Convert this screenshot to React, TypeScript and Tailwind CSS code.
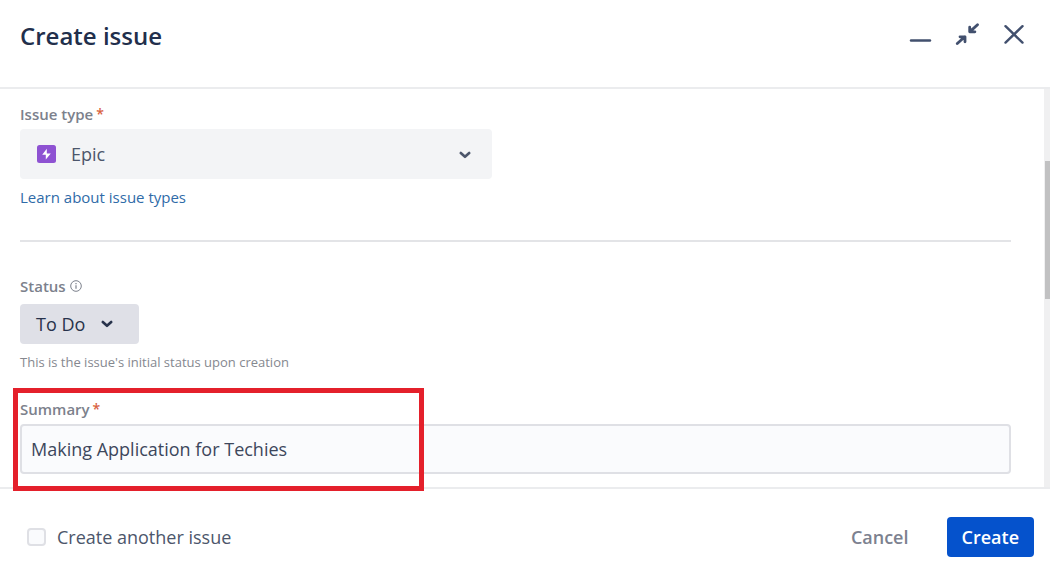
import type { ReactNode } from "react";

function Chevron({ className }: { className: string }) {
  return (
    <svg viewBox="0 0 12 8" className={className} fill="none" stroke="currentColor" strokeWidth="2.6" strokeLinecap="round" strokeLinejoin="round" aria-hidden="true">
      <path d="M1.800 2 6 5.800 10.200 2" />
    </svg>
  );
}

function FieldLabel({ htmlFor, required, children }: { htmlFor: string; required?: boolean; children: ReactNode }) {
  return (
    <label htmlFor={htmlFor} className="flex h-5 items-center gap-[3px] text-[15px] leading-5 font-semibold text-[#7c818c]">
      {children}
      {required && <span className="text-sm font-semibold text-[#d9623f]">*</span>}
    </label>
  );
}

function Header() {
  return (
    <header className="flex h-[89px] items-start justify-between border-b-2 border-[#ebecee] pt-5 pr-6 pl-5">
      <h1 className="text-2xl leading-8 font-semibold text-[#222f4c]">Create issue</h1>
      <div className="flex items-center gap-[23px] text-[#42506e]">
        <button type="button" aria-label="Minimize">
          <svg viewBox="0 0 24 28" className="h-7 w-6" fill="none" stroke="currentColor" strokeWidth="2.4" strokeLinecap="round">
            <path d="M3 20.500h19" />
          </svg>
        </button>
        <button type="button" aria-label="Collapse">
          <svg viewBox="0 0 24 28" className="h-7 w-6" fill="none" stroke="currentColor" strokeWidth="2.800" strokeLinecap="round" strokeLinejoin="round">
            <path d="M22.500 4.800 15 11.600M14.700 7.200v4.600h5.200M2.300 23.500l7.500-6.700M5 16.800h5v5" />
          </svg>
        </button>
        <button type="button" aria-label="Close">
          <svg viewBox="0 0 24 28" className="h-7 w-6" fill="none" stroke="currentColor" strokeWidth="2.4" strokeLinecap="round">
            <path d="m3.500 6.200 17 16.400M20.500 6.200l-17 16.400" />
          </svg>
        </button>
      </div>
    </header>
  );
}

function IssueTypeField() {
  return (
    <div className="flex flex-col items-start">
      <FieldLabel htmlFor="issue-type" required>Issue type</FieldLabel>
      <div className="relative mt-[5px] w-[472px] max-w-full text-[#4c566b]">
        <select id="issue-type" className="h-[50px] w-full appearance-none rounded-[4px] bg-[#f3f4f6] pr-10 pl-[51px] text-lg">
          <option>Epic</option>
        </select>
        <svg viewBox="0 0 20 18" className="pointer-events-none absolute top-4 left-4 h-[18px] w-5" aria-hidden="true">
          <rect x="1" width="19" height="18" rx="2.500" fill="#8e52d2" />
          <path d="M10.800 3.800 6.200 9.800h3.600v4.600l5-6h-4z" fill="#fff" />
        </svg>
        <Chevron className="pointer-events-none absolute top-[22px] right-[21px] h-2 w-3" />
      </div>
      <a href="#issue-types" className="mt-2 text-[15px] leading-5 text-[#2f6ba8]">Learn about issue types</a>
    </div>
  );
}

function StatusField() {
  return (
    <div className="flex flex-col items-start">
      <div className="flex items-center gap-1 text-[#7c818c]">
        <FieldLabel htmlFor="status">Status</FieldLabel>
        <svg viewBox="0 0 12 12" className="size-3" fill="none" stroke="currentColor" aria-hidden="true">
          <circle cx="6" cy="6" r="5.300" />
          <path d="M6 5.300v3.500M6 3v1.200" strokeWidth="1.200" />
        </svg>
      </div>
      <button id="status" type="button" className="mt-2 flex h-10 w-[119px] items-center gap-4 rounded-[4px] bg-[#dfe0e7] pl-4 text-lg font-medium text-[#27324b]">
        To Do
        <Chevron className="h-2 w-3" />
      </button>
      <p className="mt-2 text-[13px] leading-5 text-[#85888f]">This is the issue's initial status upon creation</p>
    </div>
  );
}

function SummaryField() {
  return (
    <div className="relative">
      <FieldLabel htmlFor="summary" required>Summary</FieldLabel>
      <input
        id="summary"
        type="text"
        defaultValue="Making Application for Techies"
        className="mt-[5px] h-[50px] w-full rounded-[4px] border-2 border-[#dfe0e5] bg-[#fafbfd] px-[9px] text-lg text-[#3d475c]"
      />
      <div className="pointer-events-none absolute -top-[11px] -left-[7px] z-10 h-[103px] w-[411px] border-[5px] border-[#e4202b]" />
    </div>
  );
}

export default function App() {
  return (
    <form className="flex min-h-screen flex-col bg-white font-['Open_Sans','Noto_Sans',sans-serif]" onSubmit={(e) => e.preventDefault()}>
      <Header />
      <main className="flex grow">
        <div className="grow pt-[15px] pr-[33px] pb-[13px] pl-5">
          <IssueTypeField />
          <hr className="mt-[33px] mb-[34px] border-t-2 border-[#e3e4e7]" />
          <StatusField />
          <div className="mt-[27px]">
            <SummaryField />
          </div>
        </div>
        <div className="w-[6px] bg-[#f0f0f1] pt-[72px]">
          <div className="ml-px h-[138px] bg-[#c1c1c2]" />
        </div>
      </main>
      <footer className="flex h-[84px] items-center justify-between border-t-2 border-[#ebecee] pt-4 pr-4 pb-[2px] pl-[27px]">
        <label className="flex items-center gap-[11px] text-lg text-[#4c566b]">
          <input type="checkbox" className="h-[18px] w-[19px] appearance-none rounded-[4px] border-2 border-[#dfe0e5] bg-[#fafbfd]" />
          Create another issue
        </label>
        <div className="flex items-center gap-[23px] text-lg font-semibold">
          <button type="button" className="h-10 px-[15px] text-[#7c818f]">Cancel</button>
          <button type="submit" className="h-10 rounded-[4px] bg-[#0552cc] px-[15px] text-white">Create</button>
        </div>
      </footer>
    </form>
  );
}
